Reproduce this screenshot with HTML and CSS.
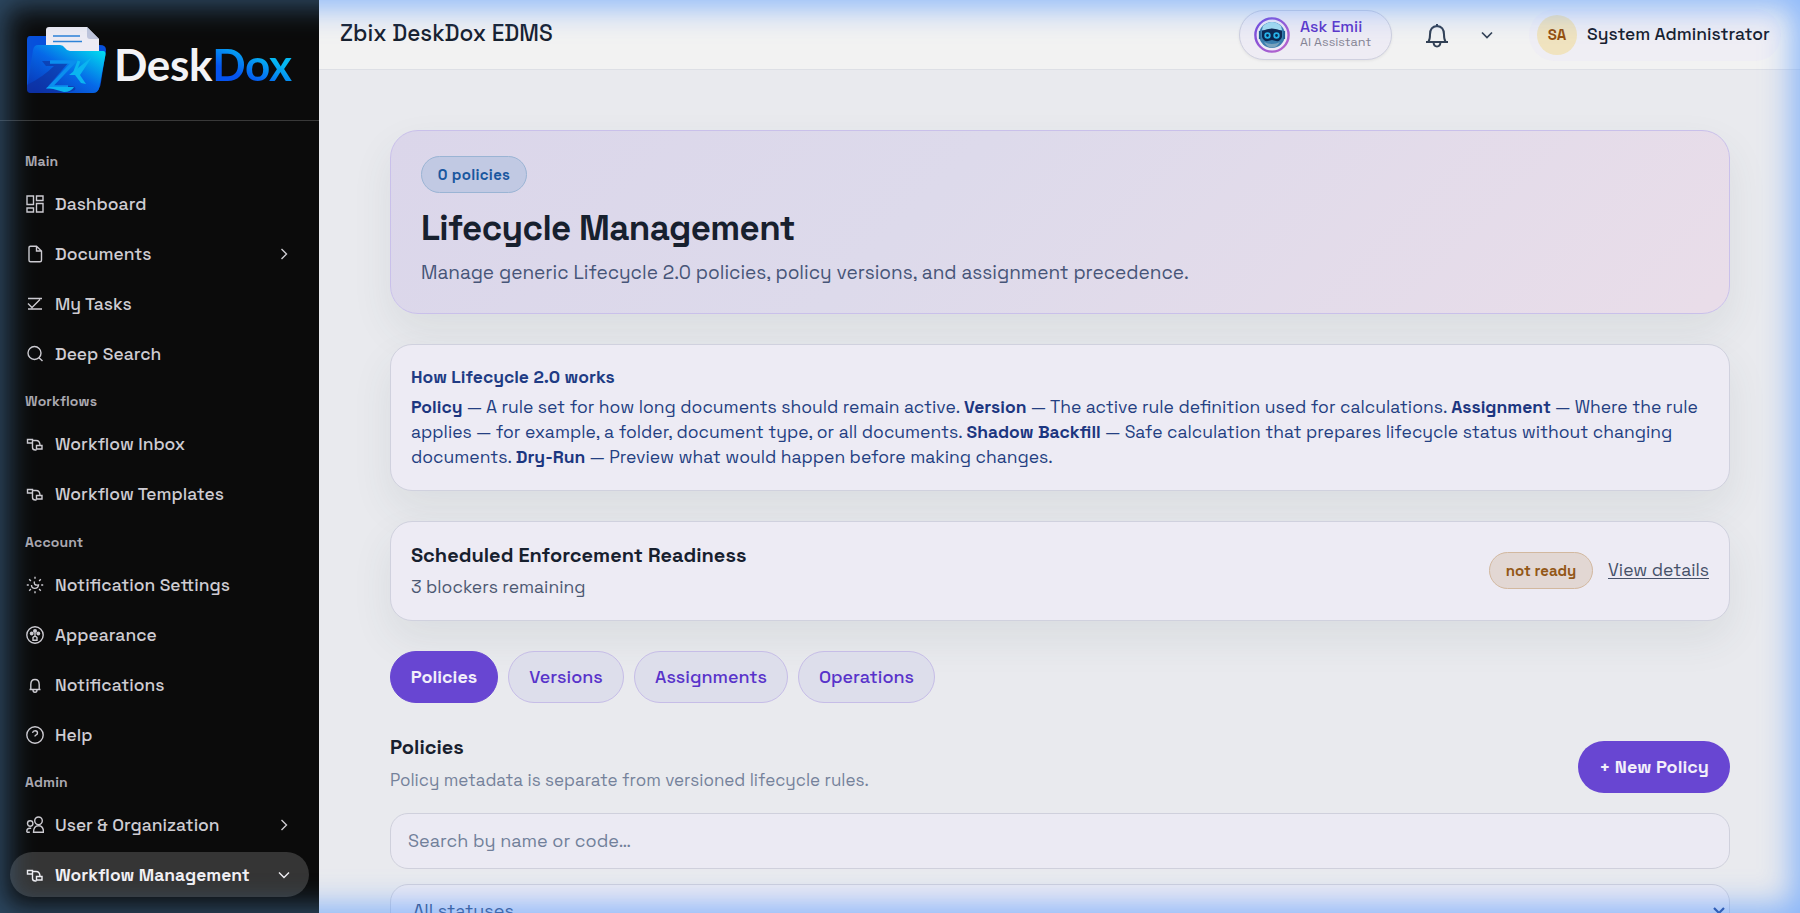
FILE: index.html
```html
<!DOCTYPE html>
<html lang="en">
<head>
<meta charset="utf-8">
<title>Zbix DeskDox EDMS</title>
<link rel="stylesheet" href="styles.css">
</head>
<body>
<svg width="0" height="0" class="defs" aria-hidden="true">
  <defs>
    <symbol id="flow" viewBox="0 0 18 18"><path d="M1.500 4.500h5v3.500h-5zM10.500 10.500h5.500v3.500h-5.500zM6.500 5.500h3.500c2.500 0 4 1.500 4 5M6.500 8v4.500c0 1.500 1 2.500 3 2.500h1"/></symbol>
    <symbol id="right" viewBox="0 0 18 18"><path d="M6.500 4l5 5-5 5"/></symbol>
    <symbol id="down" viewBox="0 0 18 18"><path d="M4 6.500l5 5 5-5"/></symbol>
  </defs>
</svg>
<div class="app">
  <aside class="sidebar">
    <div class="brand">
      <svg class="folder" width="80" height="68" viewBox="0 0 80 68">
        <defs>
          <linearGradient id="front" x1="0" y1="1" x2="1" y2="0"><stop offset="0" stop-color="#0a2fb0"/><stop offset=".5" stop-color="#0668e8"/><stop offset=".95" stop-color="#00e4f0"/></linearGradient>
        </defs>
        <path d="M4 9h20v9h50q6 0 6 5l-5 32q-1 10-8 10H6q-5 0-5-5V13q0-4 3-4z" fill="#0750dc"/>
        <path d="M23 0h38l12 12v22H20V3q0-3 3-3z" fill="#ecebf4"/>
        <path d="M61 0v9q0 3 3 3h9z" fill="#bfc5dc"/>
        <path d="M27 9h27M27 14.500h29" stroke="#2d83d8" stroke-width="1.600"/>
        <path d="M12 18h22q3 0 5 3 2 3 5 3h33q3 0 2.500 4L73 61q-1 5-6 5H5q-4 0-4-4L7 23q1-5 5-5z" fill="url(#front)"/>
        <path d="M1 58q16-8 27-19h-8l-4-5h28L22 59h22q7 0 5 4l-8 3H5q-4 0-4-4z" fill="#102b96" opacity=".55"/>
        <path d="M24 35h24L24 60h18" fill="none" stroke="#0b8fee" stroke-width="3.500"/>
        <path d="M20 60h28q-3 5-10 5zM43 48L66 30l-12 18 6 9-5-1-6-8z" fill="#0bb4f0"/>
        <path d="M53 34l-5 13" stroke="#0bb4f0" stroke-width="3"/>
      </svg>
      <div class="wordmark">Desk<span>Dox</span></div>
    </div>
    <nav class="nav">
      <h6>Main</h6>
      <a><svg class="ic" viewBox="0 0 18 18"><path d="M1 1h6.500v8.500H1zM10.500 1H17v4.500h-6.500zM10.500 8.500H17V17h-6.500zM1 13h6.500v4H1z"/></svg><span>Dashboard</span></a>
      <a><svg class="ic" viewBox="0 0 18 18"><path d="M4.500 1.200h6l5 4.800v9.300q0 1.500-1.500 1.500H4.500Q3 16.800 3 15.300V2.700q0-1.500 1.500-1.500zM10.500 1.500V6h4.700"/></svg><span>Documents</span><svg class="ic end"><use href="#right"/></svg></a>
      <a><svg class="ic" viewBox="0 0 18 18"><path d="M2 3.500h14M2 14h14M2 8.500l4 4 8-8"/></svg><span>My Tasks</span></a>
      <a><svg class="ic" viewBox="0 0 18 18"><circle cx="8.500" cy="8" r="6.500"/><path d="M13 12.800l3.500 3.200"/></svg><span>Deep Search</span></a>
      <h6>Workflows</h6>
      <a><svg class="ic"><use href="#flow"/></svg><span>Workflow Inbox</span></a>
      <a><svg class="ic"><use href="#flow"/></svg><span>Workflow Templates</span></a>
      <h6>Account</h6>
      <a><svg class="ic" viewBox="0 0 18 18"><path d="M9 .8v2M9 15.200v2M.8 9h2M15.200 9h2M3.200 3.200l1.700 1.700M13.100 13.100l1.700 1.700M14.800 3.200l-1.700 1.700M3.200 14.800l1.700-1.700M8.500 5.500c-1 2.500.5 4 4 3.500-.5 4.500-7 4.500-7 0"/></svg><span>Notification Settings</span></a>
      <a><svg class="ic" viewBox="0 0 18 18"><circle cx="9" cy="9" r="8.200"/><g class="solid"><circle cx="9" cy="5" r="2"/><circle cx="5.700" cy="7.500" r="1.900"/><circle cx="12.300" cy="7.500" r="1.900"/></g><path d="M9 7v3M7 11.500q2-2.500 4 0v2.800H7z"/></svg><span>Appearance</span></a>
      <a><svg class="ic" viewBox="0 0 18 18"><path d="M3.500 13.500h11M4.800 13V8.500q0-5 4.200-5t4.200 5V13M7 14q0 2.200 2 2.200t2-2.200"/></svg><span>Notifications</span></a>
      <a><svg class="ic" viewBox="0 0 18 18"><circle cx="9" cy="9" r="8.200"/><path d="M6.500 6.800q.5-2 2.600-2 2.400 0 2.400 2.200 0 1.500-1.700 2.200Q9 9.500 9 10.500"/></svg><span>Help</span></a>
      <h6>Admin</h6>
      <a><svg class="ic" viewBox="0 0 18 18"><circle cx="12.500" cy="4.800" r="3.800"/><circle cx="4.200" cy="7.500" r="2.700"/><path d="M7.500 16.200q0-6.500 5-6.500t5 6.500zM.8 16.200v-1q0-3 3-3h1.400M.8 16.200h3"/></svg><span>User &amp; Organization</span><svg class="ic end"><use href="#right"/></svg></a>
      <a class="active"><svg class="ic"><use href="#flow"/></svg><span>Workflow Management</span><svg class="ic end"><use href="#down"/></svg></a>
    </nav>
  </aside>
  <div class="page">
    <header class="topbar">
      <div class="title">Zbix DeskDox EDMS</div>
      <div class="emii">
        <svg width="36" height="36" viewBox="0 0 36 36">
          <defs><linearGradient id="ring" x2="1" y2="1"><stop stop-color="#7048dc"/><stop offset="1" stop-color="#bd67cc"/></linearGradient></defs>
          <circle cx="18" cy="18" r="16.600" fill="#eeeaf6" stroke="url(#ring)" stroke-width="2.400"/>
          <circle cx="18" cy="18" r="13" fill="#3a7fae"/>
          <path d="M9 9q9-8 18 0l1 4H8z" fill="#a4dcee"/>
          <path d="M8 14q10-5 20 0v6q-2 5-6 4l-4-1-4 1q-4 1-6-4z" fill="#0c2750"/>
          <g fill="#0c2750" stroke="#26b4ea" stroke-width="1.800"><circle cx="13.500" cy="18.500" r="2.300"/><circle cx="22.500" cy="18.500" r="2.300"/></g>
          <path d="M10 25q8 4 16 0-3 5.500-8 5.500T10 25z" fill="#7aa3bd"/>
          <path d="M5.800 14v8M30.200 14v8" stroke="#1b5f90" stroke-width="1.800"/>
        </svg>
        <div><b>Ask Emii</b><small>AI Assistant</small></div>
      </div>
      <svg class="bell" width="28" height="28" viewBox="0 0 28 28"><path d="M3 21h22M5.500 20.500q1.500-2 1.500-7 0-8 7-8.500 7 .5 7 8.500 0 5 1.500 7M14 3v2.500M10.500 21.500q.5 4 3.500 4t3.500-4"/></svg>
      <svg class="caret" width="18" height="18"><use href="#down"/></svg>
      <div class="user"><i>SA</i><span>System Administrator</span></div>
    </header>
    <main>
      <section class="hero">
        <span class="chip blue">0 policies</span>
        <h1>Lifecycle Management</h1>
        <p>Manage generic Lifecycle 2.0 policies, policy versions, and assignment precedence.</p>
      </section>
      <section class="card info">
        <h4>How Lifecycle 2.0 works</h4>
        <p><b>Policy</b> — A rule set for how long documents should remain active. <b>Version</b> — The active rule definition used for calculations. <b>Assignment</b> — Where the rule<br>
        applies — for example, a folder, document type, or all documents. <b>Shadow Backfill</b> — Safe calculation that prepares lifecycle status without changing<br>
        documents. <b>Dry-Run</b> — Preview what would happen before making changes.</p>
      </section>
      <section class="card ready">
        <div><h3>Scheduled Enforcement Readiness</h3><p>3 blockers remaining</p></div>
        <span class="chip amber">not ready</span>
        <a>View details</a>
      </section>
      <div class="tabs"><span class="tab on">Policies</span><span class="tab t2">Versions</span><span class="tab t3">Assignments</span><span class="tab t4">Operations</span></div>
      <div class="list-head">
        <div><h3>Policies</h3><p>Policy metadata is separate from versioned lifecycle rules.</p></div>
        <span class="new">+ New Policy</span>
      </div>
      <div class="field">Search by name or code…</div>
      <div class="field select"><span>All statuses</span><svg width="16" height="16" viewBox="0 0 16 16"><path d="M3 5l5 5 5-5"/></svg></div>
    </main>
  </div>
</div>
<div class="glow glow-side"></div>
<div class="glow glow-page"></div>
</body>
</html>
```
FILE: styles.css
```css
* { box-sizing: border-box; }
body { margin: 0; height: 913px; overflow: hidden; font-family: "Space Grotesk", Inter, "Liberation Sans", sans-serif; color: #17202e; }
h1, h3, h4, h6, p { margin: 0; }
.defs { position: absolute; }
.app { display: flex; height: 913px; overflow: hidden; }
.sidebar { width: 319px; flex: none; background: #0b0b0b; }
.brand { height: 121px; border-bottom: 1px solid #393939; display: flex; padding: 27px 0 0 26px; }
.folder { flex: none; }
.wordmark { font: 700 44px/60px Lato, sans-serif; letter-spacing: -.35px; color: #f3f3f6; margin: 7px 0 0 8px; }
.wordmark span { background: linear-gradient(25deg, #0554f0 30%, #05b8f2 65%); -webkit-background-clip: text; background-clip: text; color: transparent; }
.nav { padding: 15px 10px 0; }
.nav::before { content: ""; display: table; }
.nav h6 { font-size: 14px; font-weight: 600; line-height: 20px; height: 20px; margin: 14.500px 0 10px; padding-left: 15px; color: #aaa8b0; letter-spacing: .15px; }
.nav a { display: flex; align-items: center; height: 46px; margin-bottom: 4px; padding: 0 16px; gap: 11px; font-size: 17.500px; font-weight: 500; color: #ceccd2; white-space: nowrap; border-radius: 23px; }
.nav a.active { background: #353535; color: #f1f0f4; font-weight: 600; height: 45px; }
.ic { width: 18px; height: 18px; flex: none; fill: none; stroke: currentColor; stroke-width: 1.4; }
.ic .solid { fill: currentColor; stroke: none; }
.end { margin-left: auto; }
.page { width: 1481px; background: #e9eaee; }
.topbar { height: 70px; background: #f2f2f2; border-bottom: 1px solid #dddfe5; display: flex; align-items: center; padding: 0 19px 0 21px; }
.title { font-size: 22.500px; font-weight: 500; margin-right: auto; padding-bottom: 3px; }
.emii { width: 153px; height: 50px; border: 1px solid #cfd0df; border-radius: 26px; background: #eeecf4; display: flex; align-items: center; gap: 10px; padding-left: 14px; box-shadow: 0 1px 3px #0001; }
.emii > div { padding-bottom: 2px; }
.emii b, .emii small { display: block; white-space: nowrap; }
.emii b { font-size: 16px; line-height: 16px; font-weight: 500; color: #5c35c9; }
.emii small { font-size: 12.600px; line-height: 14px; color: #858493; }
.bell { margin-left: 31px; fill: none; stroke: #334155; stroke-width: 2; }
.caret { margin-left: 27px; fill: none; stroke: #334155; stroke-width: 1.700; }
.user { margin-left: 33px; width: 252px; height: 52px; border-radius: 26px; display: flex; align-items: center; gap: 10px; padding-left: 8px; background: #edebf4aa; font-size: 17.500px; font-weight: 500; white-space: nowrap; }
.user span { padding-bottom: 1px; }
.user i { width: 40px; height: 40px; flex: none; border-radius: 50%; background: #f0e3bf; color: #95500f; font-size: 15px; font-weight: 600; font-style: normal; line-height: 40px; text-align: center; }
main { padding: 60px 70px 0 71px; }
.hero { height: 184px; border: 1px solid #c9c0ea; border-radius: 28px; padding: 25px 30px; background: linear-gradient(135deg, #dbd6ea, #dddaeb 40%, #e9dde9 98%); box-shadow: 0 18px 40px #3c505016; }
.chip { display: inline-block; height: 37px; border: 1px solid; border-radius: 19px; font-size: 15px; font-weight: 600; line-height: 36px; text-align: center; white-space: nowrap; }
.blue { width: 106px; background: #c1c9e3; border-color: #9ab4d4; color: #19579f; letter-spacing: .3px; }
h1 { font-size: 35px; letter-spacing: -.62px; font-weight: 700; line-height: 44px; margin-top: 13px; white-space: nowrap; }
.hero p { font-size: 19px; line-height: 28px; margin-top: 9px; color: #475578; white-space: nowrap; }
.card { margin-top: 30px; border: 1px solid #d0d1de; border-radius: 22px; background: #edebf4; box-shadow: 0 18px 40px #3c505016; padding: 0 20px; }
.info { height: 147px; padding-top: 19px; color: #243f82; font-size: 17.500px; line-height: 25px; white-space: nowrap; }
.info h4 { font-size: 17.500px; line-height: 26px; font-weight: 600; margin-bottom: 5px; color: #203b84; }
.info b { font-weight: 700; color: #1c3680; }
.ready { height: 100px; display: flex; align-items: center; }
.ready > div { margin-right: auto; padding-bottom: 3px; }
h3 { font-size: 20px; line-height: 30px; font-weight: 600; }
.ready p { font-size: 17.500px; line-height: 26px; margin-top: 4px; color: #4c5872; }
.amber { width: 104px; background: #e2d7d3; border-color: #d2b89f; color: #935717; margin-bottom: 2px; }
.ready a { font-size: 17.500px; margin-left: 15px; padding-bottom: 2px; color: #465169; text-decoration: underline; text-underline-offset: 2px; }
.tabs { display: flex; gap: 10px; margin-top: 30px; }
.tab { height: 52px; width: 108px; border: 1px solid #c6bde7; border-radius: 26px; background: #dddeeb; color: #5833ca; font-size: 18px; line-height: 50px; font-weight: 500; text-align: center; }
.tab.on { background: #6846d2; border-color: #6846d2; color: #f2effa; font-weight: 600; }
.t2 { width: 116px; } .t3 { width: 154px; } .t4 { width: 137px; }
.list-head { display: flex; align-items: center; justify-content: space-between; height: 61px; margin-top: 29px; }
.list-head > div { padding-bottom: 1px; }
.list-head p { font-size: 17px; line-height: 26px; margin-top: 5px; color: #75829b; }
.new { width: 152px; height: 52px; border-radius: 26px; background: #6846d2; color: #f2effa; font-size: 18px; font-weight: 600; line-height: 52px; text-align: center; align-self: flex-end; white-space: nowrap; }
.field { height: 56px; margin-top: 20px; border: 1px solid #cfd0dc; border-radius: 18px; background: #ebeaf3; padding: 0 17px; line-height: 54px; font-size: 18px; color: #71809a; }
.select { margin-top: 15px; display: flex; justify-content: space-between; padding: 0 2px 0 22px; line-height: 52px; color: #334b76; }
.select svg { margin-top: 18px; fill: none; stroke: #1f3d8a; stroke-width: 2.200; }
.glow { position: absolute; inset: 0; pointer-events: none; }
.glow-side { clip-path: inset(0 1481px 0 0); box-shadow: inset 0 0 28px 7px #4a7dae90; }
.glow-page { clip-path: inset(0 0 0 319px); box-shadow: inset 0 0 30px 8px #4f96ffa0; }
```
